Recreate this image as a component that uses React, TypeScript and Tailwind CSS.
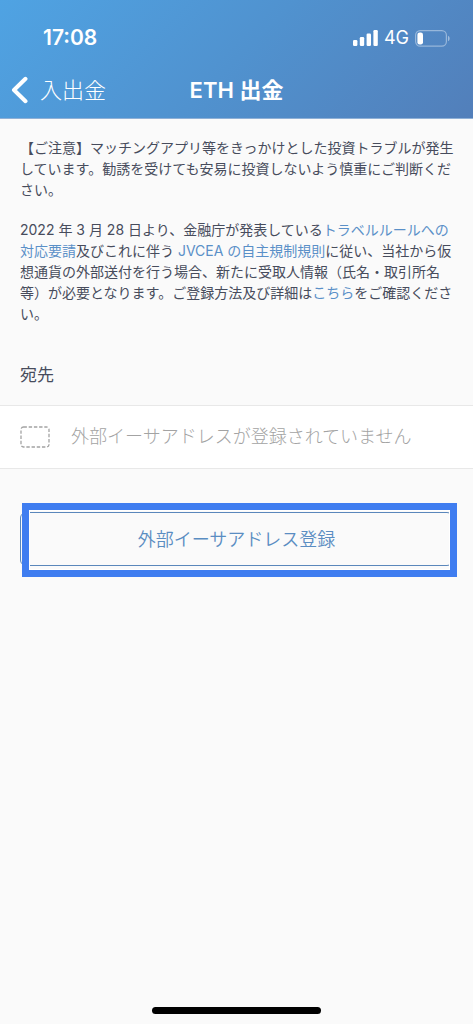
import { ReactNode } from 'react'

function StatusBar() {
  return (
    <div className="flex h-[62px] items-center justify-between pl-[43px] pr-[23px] pt-3.5 text-white">
      <span className="text-[21px] font-semibold leading-6">17:08</span>
      <div className="flex items-center gap-1.5">
        <svg width="25" height="16" viewBox="0 0 25 16" fill="currentColor" aria-hidden="true">
          <rect x="0" y="10" width="4.4" height="6" rx="1.2" />
          <rect x="6.8" y="7" width="4.4" height="9" rx="1.2" />
          <rect x="13.6" y="3.5" width="4.4" height="12.5" rx="1.2" />
          <rect x="20.4" y="0" width="4.4" height="16" rx="1.2" />
        </svg>
        <span className="text-[18px] leading-6">4G</span>
        <svg width="35" height="17" viewBox="0 0 35 17" fill="none" aria-hidden="true">
          <rect x="0.6" y="0.6" width="30.8" height="15.6" rx="4.6" stroke="#fff" strokeOpacity="0.4" strokeWidth="1.2" />
          <rect x="2.4" y="2.5" width="5.6" height="12" rx="2.2" fill="#fff" />
          <path d="M33 5.8c1 .4 1.6 1.4 1.6 2.7s-.6 2.3-1.6 2.7z" fill="#fff" fillOpacity="0.45" />
        </svg>
      </div>
    </div>
  )
}

function NavBar() {
  return (
    <nav className="relative flex h-14 items-center justify-center text-white">
      <button type="button" className="absolute inset-y-0 left-[11px] flex items-center gap-3">
        <svg width="17" height="28" viewBox="0 0 17 28" fill="none" aria-hidden="true">
          <path d="M14.5 2.8 3 14l11.5 11.2" stroke="currentColor" strokeWidth="4" strokeLinecap="round" strokeLinejoin="round" />
        </svg>
        <span className="text-[22px] font-light leading-8">入出金</span>
      </button>
      <h1 className="text-[22px] font-semibold leading-8">ETH 出金</h1>
    </nav>
  )
}

function TextLink({ children }: { children: ReactNode }) {
  return (
    <a href="#" className="text-[#5a90c8]">
      {children}
    </a>
  )
}

export default function App() {
  return (
    <div
      lang="ja"
      className="flex min-h-screen flex-col bg-[#fafafa] font-['Inter','Noto_Sans_CJK_JP',sans-serif] text-[#474c5c]"
    >
      <header className="border-b border-[#8fb0d6] bg-linear-135 from-[#4fa3e3] via-[#5092cf] to-[#527fba]">
        <StatusBar />
        <NavBar />
      </header>

      <main className="flex-1">
        {/* 注意事項 */}
        <div className="space-y-[19px] pl-5 pr-4 pt-[18px] text-[14px] leading-[21px]">
          <p>
            【ご注意】マッチングアプリ等をきっかけとした投資トラブルが発生しています。勧誘を受けても安易に投資しないよう慎重にご判断ください。
          </p>
          <p>
            2022 年 3 月 28 日より、金融庁が発表している<TextLink>トラベルルールへの対応要請</TextLink>及びこれに伴う{' '}
            <TextLink>JVCEA の自主規制規則</TextLink>
            に従い、当社から仮想通貨の外部送付を行う場合、新たに受取人情報（氏名・取引所名等）が必要となります。ご登録方法及び詳細は
            <TextLink>こちら</TextLink>をご確認ください。
          </p>
        </div>

        {/* 宛先 */}
        <section className="mt-[39px]">
          <h2 className="px-5 text-[17px] leading-6">宛先</h2>
          <div className="mt-[18px] flex h-16 items-center gap-[21px] border-y border-[#e8e8e8] bg-white px-5 text-[#a3a3a3]">
            <svg width="30" height="22" viewBox="0 0 30 22" fill="none" className="shrink-0" aria-hidden="true">
              <rect x="1" y="1" width="28" height="20" rx="2.5" stroke="currentColor" strokeWidth="1.3" strokeDasharray="3.4 1.8" />
            </svg>
            <span className="text-[18px] font-light leading-6">外部イーサアドレスが登録されていません</span>
          </div>
        </section>

        <div className="relative mx-5 mt-[43px]">
          <button
            type="button"
            className="block h-[54px] w-full rounded-md border border-[#5a87bb] text-[18px] font-[350] text-[#5a8dc2]"
          >
            外部イーサアドレス登録
          </button>
          <div className="pointer-events-none absolute -bottom-[11px] -right-1 -top-[9px] left-0.5 border-[7px] border-[#3f7df0] inset-ring inset-ring-white" />
        </div>
      </main>

      <footer className="flex justify-center pb-[10px]">
        <div className="h-[7px] w-[169px] rounded-full bg-black" />
      </footer>
    </div>
  )
}
